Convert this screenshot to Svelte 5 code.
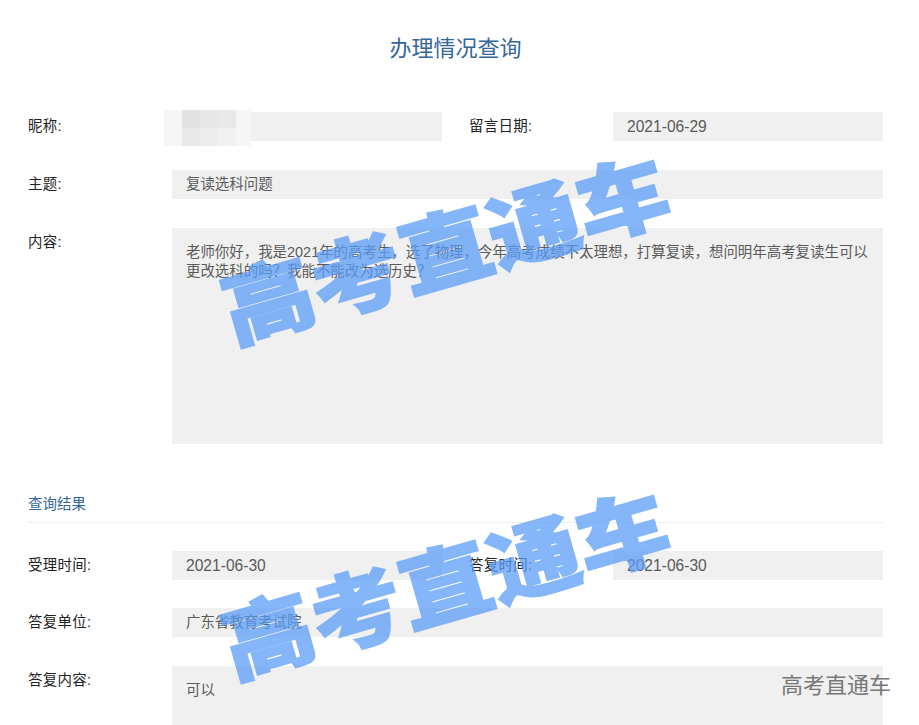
<script>
  const marks = [
    { left: 214, top: 180 },
    { left: 214, top: 515 }
  ];
</script>

<div class="page">
  <h1>办理情况查询</h1>

  <div class="rows top">
    <div class="row">
      <div class="cell">
        <span class="label">昵称:</span>
        <div class="field nick">
          <div class="mosaic">
            <i></i><i class="d1"></i><i class="d2"></i><i class="d3"></i><i></i>
            <i></i><i class="d3"></i><i class="d4"></i><i class="d5"></i><i></i>
          </div>
        </div>
      </div>
      <div class="cell second">
        <span class="label">留言日期:</span>
        <div class="field date">2021-06-29</div>
      </div>
    </div>

    <div class="row">
      <span class="label">主题:</span>
      <div class="field">复读选科问题</div>
    </div>

    <div class="row">
      <span class="label">内容:</span>
      <div class="field area">老师你好&#65292;我是2021年的高考生&#65292;选了物理&#65292;今年高考成绩不太理想&#65292;打算复读&#65292;想问明年高考复读生可以更改选科的吗&#65311;我能不能改为选历史&#65311;</div>
    </div>
  </div>

  <h2>查询结果</h2>

  <div class="rows">
    <div class="row tight">
      <div class="cell">
        <span class="label">受理时间:</span>
        <div class="field date">2021-06-30</div>
      </div>
      <div class="cell second">
        <span class="label">答复时间:</span>
        <div class="field date">2021-06-30</div>
      </div>
    </div>

    <div class="row">
      <span class="label">答复单位:</span>
      <div class="field">广东省教育考试院</div>
    </div>

    <div class="row">
      <span class="label">答复内容:</span>
      <div class="field area">可以</div>
    </div>
  </div>

  {#each marks as m}
    <div class="mark" style="left: {m.left}px; top: {m.top}px">高考直通车</div>
  {/each}
  <div class="corner">高考直通车</div>
</div>

<style>
  :global(body) {
    margin: 0;
    background: #fff;
  }
  .page {
    position: relative;
    box-sizing: border-box;
    height: 725px;
    overflow: hidden;
    padding: 0 36px 0 28px;
    font-family: "Liberation Sans", "Noto Sans CJK SC", sans-serif;
    font-size: 14.45px;
    color: #333;
  }
  h1 {
    margin: 0;
    padding-top: 33px;
    height: 80px;
    box-sizing: border-box;
    text-align: center;
    font-size: 22px;
    line-height: 32px;
    font-weight: 400;
    color: #336699;
  }
  h2 {
    margin: 51px 0 28px;
    padding-bottom: 9px;
    border-bottom: 1px solid #eee;
    font-size: 14.5px;
    line-height: 18px;
    font-weight: 400;
    color: #336699;
  }
  .rows {
    display: flex;
    flex-direction: column;
    gap: 29px;
  }
  .top {
    margin-top: 32px;
  }
  .row {
    display: flex;
  }
  .tight {
    margin-bottom: -1px;
  }
  .cell {
    display: flex;
    width: 414px;
  }
  .second {
    width: 441px;
    padding-left: 27px;
    box-sizing: border-box;
  }
  .label {
    flex: none;
    width: 144px;
    line-height: 29px;
    letter-spacing: 0.3px;
    color: #222;
  }
  .field {
    flex: 1;
    position: relative;
    min-height: 29px;
    padding: 0 14px;
    line-height: 29px;
    background: #f0f0f0;
    color: #5a5a5a;
  }
  .date {
    font-size: 15.6px;
  }
  .area {
    height: 216px;
    padding-top: 15px;
    line-height: 19px;
    box-sizing: border-box;
  }
  .mosaic {
    position: absolute;
    left: -8px;
    top: -2px;
    display: grid;
    grid-template-columns: 18px 18px 18px 18px 14px;
    grid-template-rows: 18px 18px;
    filter: blur(0.6px);
  }
  .mosaic i {
    background: #f6f6f6;
  }
  .mosaic .d1 { background: #e2e2e2; }
  .mosaic .d2 { background: #e7e7e7; }
  .mosaic .d3 { background: #e9e9e9; }
  .mosaic .d4 { background: #ececec; }
  .mosaic .d5 { background: #f1f1f1; }
  .mark {
    position: absolute;
    font-family: "Noto Sans CJK SC", sans-serif;
    font-size: 92px;
    font-weight: 900;
    line-height: 130px;
    white-space: nowrap;
    color: #5a9df8;
    -webkit-text-stroke: 2px #5a9df8;
    opacity: 0.74;
    transform: rotate(-16deg) scaleY(0.9);
  }
  .corner {
    position: absolute;
    right: 28px;
    top: 672px;
    font-size: 22px;
    line-height: 28px;
    color: #777;
  }
</style>
